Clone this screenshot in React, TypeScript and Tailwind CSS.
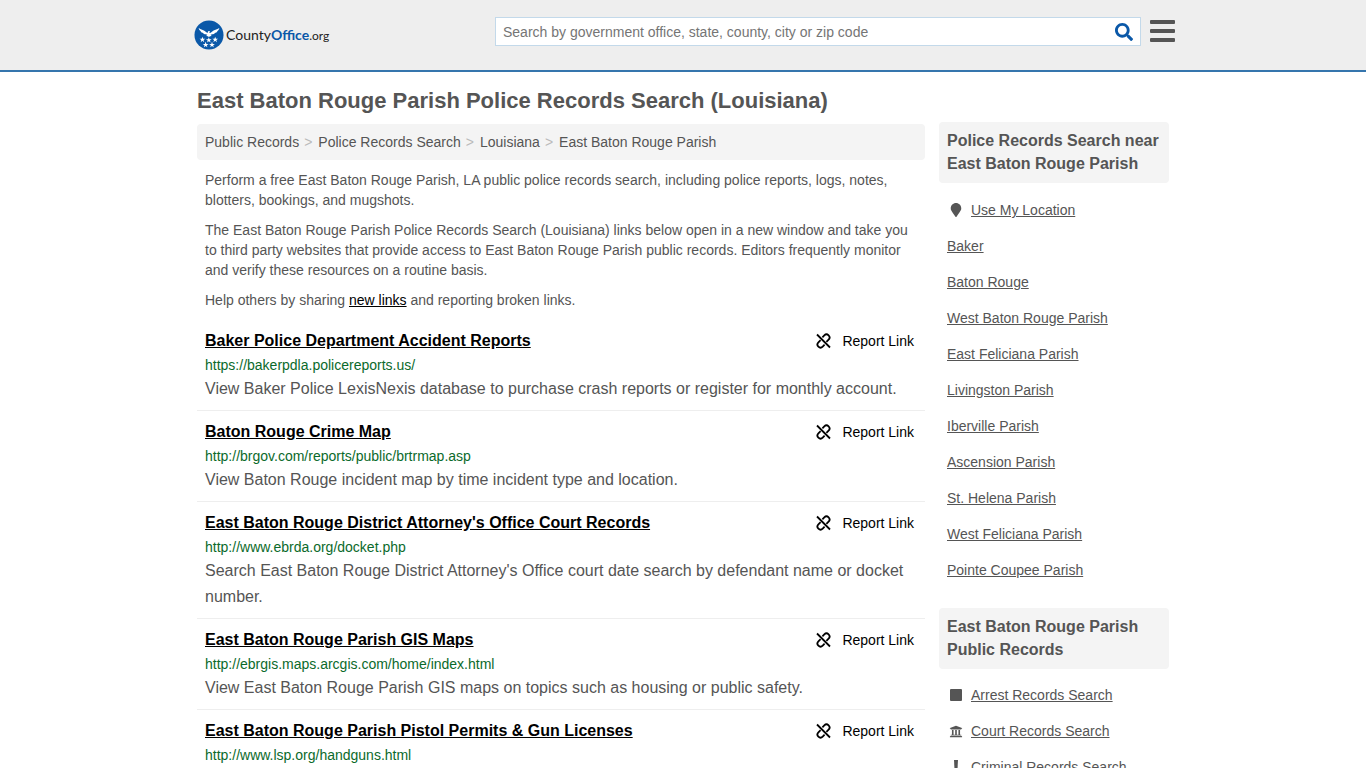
import React from "react";

type Listing = { title: string; url: string; text?: string };

const listings: Listing[] = [
  {
    title: "Baker Police Department Accident Reports",
    url: "https://bakerpdla.policereports.us/",
    text: "View Baker Police LexisNexis database to purchase crash reports or register for monthly account.",
  },
  {
    title: "Baton Rouge Crime Map",
    url: "http://brgov.com/reports/public/brtrmap.asp",
    text: "View Baton Rouge incident map by time incident type and location.",
  },
  {
    title: "East Baton Rouge District Attorney's Office Court Records",
    url: "http://www.ebrda.org/docket.php",
    text: "Search East Baton Rouge District Attorney's Office court date search by defendant name or docket number.",
  },
  {
    title: "East Baton Rouge Parish GIS Maps",
    url: "http://ebrgis.maps.arcgis.com/home/index.html",
    text: "View East Baton Rouge Parish GIS maps on topics such as housing or public safety.",
  },
  {
    title: "East Baton Rouge Parish Pistol Permits & Gun Licenses",
    url: "http://www.lsp.org/handguns.html",
  },
];

const crumbs = ["Public Records", "Police Records Search", "Louisiana", "East Baton Rouge Parish"];

const nearby = [
  "Baker",
  "Baton Rouge",
  "West Baton Rouge Parish",
  "East Feliciana Parish",
  "Livingston Parish",
  "Iberville Parish",
  "Ascension Parish",
  "St. Helena Parish",
  "West Feliciana Parish",
  "Pointe Coupee Parish",
];

const star = "M0-3.2 .8-1 3.1-1 1.2.4 1.9 2.6 0 1.2-1.9 2.6-1.2.4-3.1-1-.8-1Z";

function Logo() {
  return (
    <a href="#" aria-label="CountyOffice.org" className="flex items-center">
      <svg viewBox="0 0 32 32" className="h-[30px] w-[30px]" aria-hidden="true">
        <circle cx="16" cy="16" r="15.5" fill="#0a58a8" />
        <g fill="#fff">
          <path d="M5 8.600c2 1.700 5.200 1.900 7.500 3.900.8.700 1.300 1.300 2 1.400l.3-1.500c.3-.8 1.600-.9 2.300-.2l-.8.500c.1.500.3 1 .8 1.200.8-.1 1.300-.7 2-1.400 2.200-2 5.500-2.200 7.900-3.900-.2 1.700-1 2.500-2 3-.3 1.200-1.200 1.900-2.400 2.100-.8 1.100-1.900 1.600-3.200 1.600l-1.700.5 1.200 1.300-1.800.1-1.200.8-1.100-.8-1.800-.1 1.200-1.300-1.700-.5c-1.300 0-2.300-.5-3.100-1.600-1.200-.2-2.100-.9-2.400-2.100-1-.5-1.800-1.300-2-3Z" />
          <path d={star} transform="translate(9 21)" />
          <path d={star} transform="translate(15.800 21.500)" />
          <path d={star} transform="translate(22.600 21)" />
          <path d={star} transform="translate(12.400 26.500)" />
          <path d={star} transform="translate(19.200 26.500)" />
        </g>
      </svg>
      <span className="ml-[2px] font-['Lato',sans-serif] text-sm leading-5 text-[#222]">
        County<b className="text-[#0a58a8]">Office</b>
        <span className="text-xs">.org</span>
      </span>
    </a>
  );
}

function SearchIcon() {
  return (
    <svg viewBox="0 0 512 512" className="h-[18px] w-[18px]" fill="#0a58a8" aria-hidden="true">
      <path d="M505 442.700L405.300 343c-4.500-4.500-10.600-7-17-7H372c27.600-35.300 44-79.700 44-128C416 93.100 322.900 0 208 0S0 93.100 0 208s93.100 208 208 208c48.300 0 92.700-16.400 128-44v16.300c0 6.400 2.500 12.500 7 17l99.700 99.700c9.400 9.400 24.600 9.400 33.900 0l28.300-28.300c9.400-9.400 9.400-24.600.1-34zM208 336c-70.700 0-128-57.200-128-128 0-70.700 57.200-128 128-128 70.700 0 128 57.200 128 128 0 70.700-57.200 128-128 128z" />
    </svg>
  );
}

function BrokenLinkIcon() {
  return (
    <svg viewBox="0 0 16 16" className="h-4 w-4" fill="none" stroke="#000" strokeWidth="1.8" aria-hidden="true">
      <path d="M2 1.500 15 14.500" />
      <path d="M7.400 4.300 9.300 2.400a3 3 0 0 1 4.300 4.300L11.400 8.900" />
      <path d="M9.600 11.700 7.700 13.600a3 3 0 0 1-4.300-4.300L5.600 7.100" />
    </svg>
  );
}

function PinIcon() {
  return (
    <svg viewBox="0 0 384 512" className="h-[14px] w-[18px]" fill="#555" aria-hidden="true">
      <path d="M172.300 501.700C27 291 0 269.400 0 192 0 86 86 0 192 0s192 86 192 192c0 77.400-27 99-172.300 309.700-9.500 13.800-29.900 13.800-39.400 0z" />
    </svg>
  );
}

function SquareIcon() {
  return (
    <svg viewBox="0 0 18 14" className="h-[14px] w-[18px]" fill="#555" aria-hidden="true">
      <rect x="3" y="1" width="12" height="12" rx="1" />
    </svg>
  );
}

function CourtIcon() {
  return (
    <svg viewBox="0 0 512 512" className="h-[13px] w-[18px]" fill="#555" aria-hidden="true">
      <path d="M496 128v16a8 8 0 0 1-8 8h-24v12c0 6.600-5.400 12-12 12H60c-6.600 0-12-5.400-12-12v-12H24a8 8 0 0 1-8-8v-16a8 8 0 0 1 4.900-7.400l232-88a8 8 0 0 1 6.100 0l232 88A8 8 0 0 1 496 128zm-24 304H40c-13.300 0-24 10.700-24 24v16a8 8 0 0 0 8 8h464a8 8 0 0 0 8-8v-16c0-13.300-10.700-24-24-24zM96 192v192H60c-6.600 0-12 5.400-12 12v20h416v-20c0-6.600-5.400-12-12-12h-36V192h-64v192h-64V192h-64v192h-64V192H96z" />
    </svg>
  );
}

function ExclamationIcon() {
  return (
    <svg viewBox="0 0 18 14" className="h-[14px] w-[18px]" fill="#555" aria-hidden="true">
      <path d="M7 0h4l-.5 9h-3Z" />
      <circle cx="9" cy="12" r="2" />
    </svg>
  );
}

const records = [
  { label: "Arrest Records Search", icon: <SquareIcon /> },
  { label: "Court Records Search", icon: <CourtIcon /> },
  { label: "Criminal Records Search", icon: <ExclamationIcon /> },
];

function SideItem({ label, icon }: { label: string; icon?: React.ReactNode }) {
  return (
    <li className="flex h-9 items-center gap-[6px] px-2">
      {icon}
      <a href="#" className="text-sm underline">
        {label}
      </a>
    </li>
  );
}

function SideHeading({ children }: { children: React.ReactNode }) {
  return <h2 className="rounded bg-[#f4f4f4] px-2 pt-[7px] pb-2 text-base leading-[23px] font-bold">{children}</h2>;
}

export default function App() {
  return (
    <div className="h-screen overflow-hidden bg-white font-['Liberation_Sans',Arial,sans-serif] text-[#555]">
      <header className="border-b-2 border-[#3575ad] bg-[#eee]">
        <div className="mx-auto flex h-[70px] max-w-[984px] items-start">
          <div className="mt-5 ml-[3px] flex-1">
            <Logo />
          </div>
          <form className="mt-[17px] flex h-[29px] w-[646px] items-center border border-[#c3d9ea] bg-white">
            <input
              type="text"
              aria-label="Search"
              placeholder="Search by government office, state, county, city or zip code"
              className="min-w-0 flex-1 px-[7px] text-sm outline-none placeholder:text-[#757575]"
            />
            <button type="button" aria-label="Submit search" className="mr-[7px]">
              <SearchIcon />
            </button>
          </form>
          <button type="button" aria-label="Menu" className="mt-5 ml-[9px] flex w-[25px] flex-col gap-[5px]">
            <span className="h-1 w-full rounded-[1px] bg-[#555]" />
            <span className="h-1 w-full rounded-[1px] bg-[#555]" />
            <span className="h-1 w-full rounded-[1px] bg-[#555]" />
          </button>
        </div>
      </header>

      <div className="mx-auto flex max-w-[972px] items-start gap-[14px]">
        <main className="min-w-0 flex-1">
          <h1 className="mt-[17px] mb-[11px] text-[22px] leading-6 font-bold">
            East Baton Rouge Parish Police Records Search (Louisiana)
          </h1>
          <nav aria-label="Breadcrumb" className="rounded bg-[#f4f4f4] px-2 py-2 text-sm">
            <ol className="flex">
              {crumbs.map((c, i) => (
                <li key={c}>
                  {i > 0 && <span className="pr-[6px] pl-[5px] text-[#bbb]">&gt;</span>}
                  <a href="#">{c}</a>
                </li>
              ))}
            </ol>
          </nav>
          <div className="flex flex-col gap-[10px] px-2 py-[10px] text-sm">
            <p>
              Perform a free East Baton Rouge Parish, LA public police records search, including police reports, logs, notes,
              blotters, bookings, and mugshots.
            </p>
            <p>
              The East Baton Rouge Parish Police Records Search (Louisiana) links below open in a new window and take you to
              third party websites that provide access to East Baton Rouge Parish public records. Editors frequently monitor
              and verify these resources on a routine basis.
            </p>
            <p>
              Help others by sharing{" "}
              <a href="#" className="text-black underline">
                new links
              </a>{" "}
              and reporting broken links.
            </p>
          </div>
          <ul>
            {listings.map((l) => (
              <li key={l.title} className="border-b border-[#eee] p-2">
                <div className="flex items-center justify-between pr-[3px]">
                  <h3 className="text-base leading-[26px] font-bold text-black">
                    <a href="#" className="underline">
                      {l.title}
                    </a>
                  </h3>
                  <button type="button" className="flex items-center gap-[11px] text-sm text-black">
                    <BrokenLinkIcon />
                    Report Link
                  </button>
                </div>
                <p className="text-sm leading-[22px] text-[#0b6a2b]">{l.url}</p>
                {l.text && <p className="text-base leading-[26px]">{l.text}</p>}
              </li>
            ))}
          </ul>
        </main>

        <aside className="mt-[50px] w-[230px] shrink-0">
          <SideHeading>Police Records Search near East Baton Rouge Parish</SideHeading>
          <ul className="mt-[9px] mb-5">
            <SideItem label="Use My Location" icon={<PinIcon />} />
            {nearby.map((n) => (
              <SideItem key={n} label={n} />
            ))}
          </ul>
          <SideHeading>East Baton Rouge Parish Public Records</SideHeading>
          <ul className="mt-2">
            {records.map((r) => (
              <SideItem key={r.label} label={r.label} icon={r.icon} />
            ))}
          </ul>
        </aside>
      </div>
    </div>
  );
}
